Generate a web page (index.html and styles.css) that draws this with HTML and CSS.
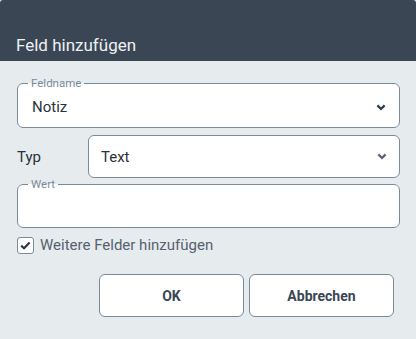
FILE: index.html
```html
<!DOCTYPE html>
<html lang="de">
  <head>
    <meta charset="UTF-8" />
    <meta name="viewport" content="width=device-width, initial-scale=1.0" />
    <title>Feld hinzufügen</title>
    <link rel="stylesheet" href="styles.css">
  </head>
  <body>
    <div class="dialog">
      <div class="dialog-header">
        <h2>Feld hinzufügen</h2>
      </div>
      <div class="dialog-body">
        <fieldset class="field">
          <legend>Feldname</legend>
          <div class="select-row">
            <span>Notiz</span>
            <svg class="chevron" width="10" height="7" viewBox="0 0 10 7"><path d="M1.4 1.4 5 5 8.6 1.4" fill="none" stroke="#2f3a46" stroke-width="2.2"/></svg>
          </div>
        </fieldset>

        <div class="type-row">
          <span class="type-label">Typ</span>
          <div class="select-box">
            <span>Text</span>
            <svg class="chevron" width="10" height="7" viewBox="0 0 10 7"><path d="M1.4 1.4 5 5 8.6 1.4" fill="none" stroke="#5a646f" stroke-width="2.2"/></svg>
          </div>
        </div>

        <fieldset class="field field-value">
          <legend>Wert</legend>
          <div class="input-row"></div>
        </fieldset>

        <label class="check">
          <span class="check-box">
            <svg width="11" height="9" viewBox="0 0 11 9"><path d="M1.2 4.6 4 7.2 9.6 1.4" fill="none" stroke="#2f3a46" stroke-width="2.2"/></svg>
          </span>
          Weitere Felder hinzufügen
        </label>

        <div class="actions">
          <button class="btn btn-ok">OK</button>
          <button class="btn btn-cancel">Abbrechen</button>
        </div>
      </div>
    </div>
  </body>
</html>
```

FILE: styles.css
```css
html,
body {
  margin: 0;
  height: 100%;
  background: #e6ebee;
  font-family: Roboto, "Noto Sans", sans-serif;
}

.dialog {
  height: 100%;
  display: flex;
  flex-direction: column;
  background: #e6ebee;
  border-radius: 3px 3px 0 0;
  overflow: hidden;
}

.dialog-header {
  background: #3a4654;
  height: 61px;
  display: flex;
  align-items: flex-end;
  padding: 0 16px;
  box-sizing: border-box;
}

.dialog-header h2 {
  margin: 0 0 6px;
  font-size: 17px;
  font-weight: 400;
  color: #eef1f4;
}

.dialog-body {
  padding: 16px 16px 0 17px;
}

.field {
  margin: 0;
  padding: 0 14px;
  border: 1px solid #7b8a9a;
  border-radius: 6px;
  background: #fff;
  min-width: 0;
}

.field legend {
  font-size: 11.5px;
  line-height: 13px;
  color: #7b8a9a;
  padding: 0 3px;
  margin-left: -4px;
}

.select-row,
.select-box {
  display: flex;
  align-items: center;
  justify-content: space-between;
  font-size: 15px;
  color: #2a323b;
}

.select-row {
  height: 40px;
  margin-top: -3px;
}

.chevron {
  margin-right: -1px;
}

.type-row {
  display: flex;
  align-items: center;
  margin-top: 7px;
}

.type-label {
  width: 71px;
  font-size: 15px;
  color: #2a323b;
}

.select-box {
  flex: 1;
  height: 41px;
  padding: 0 13px 0 12px;
  background: #fff;
  border: 1px solid #7b8a9a;
  border-radius: 6px;
}

.field-value {
  margin-top: 0;
}

.input-row {
  height: 36px;
}

.check {
  display: flex;
  align-items: center;
  gap: 6px;
  margin-top: 8px;
  font-size: 15px;
  color: #56626e;
}

.check-box {
  width: 15px;
  height: 15px;
  border: 1px solid #7b8a9a;
  border-radius: 3px;
  background: #fff;
  display: flex;
  align-items: center;
  justify-content: center;
}

.actions {
  display: flex;
  justify-content: flex-end;
  gap: 5px;
  margin-top: 20px;
  padding-right: 6px;
}

.btn {
  height: 43px;
  background: #fff;
  border: 1px solid #7b8a9a;
  border-radius: 6px;
  font-family: inherit;
  font-size: 14px;
  font-weight: 700;
  color: #3a4654;
}

.btn-ok {
  width: 145px;
}

.btn-cancel {
  width: 145px;
}
```
